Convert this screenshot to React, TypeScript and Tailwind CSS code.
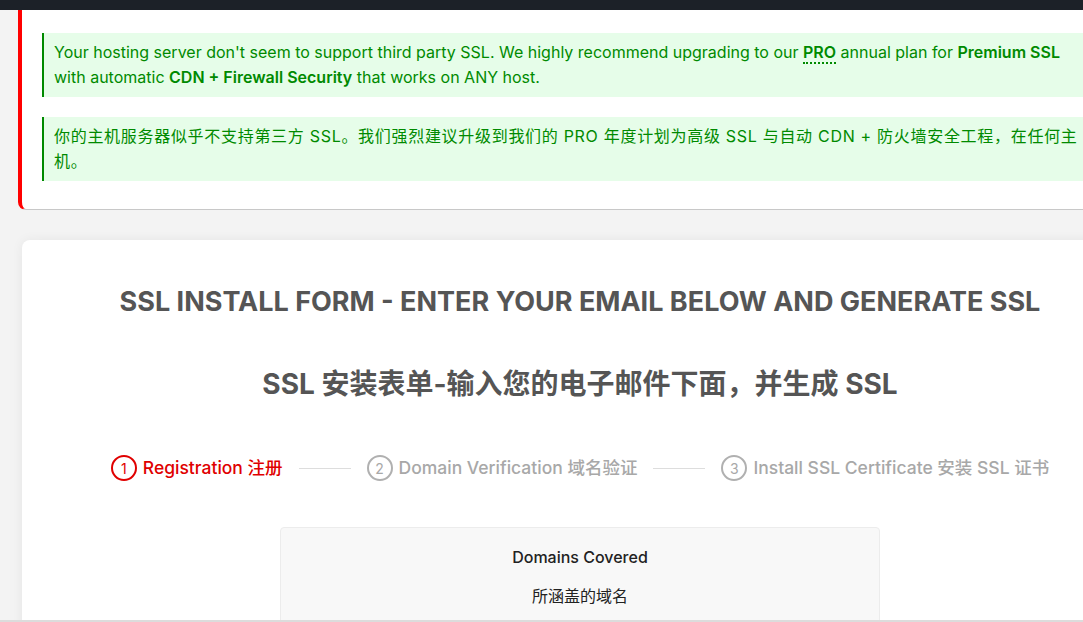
const sans = "font-['Inter','Liberation_Sans','Noto_Sans_CJK_SC',sans-serif]";

const Notice = ({ children, className = '' }: { children: React.ReactNode; className?: string }) => (
  <div
    className={`w-[1058px] border-l-2 border-[#008a00] bg-[#e6fde9] py-[7px] pl-[10px] pr-[12px] text-[16px] leading-[25px] text-[#008a00] ${className}`}
  >
    {children}
  </div>
);

const Step = ({ n, label, active }: { n: number; label: string; active?: boolean }) => (
  <div className={`flex items-center gap-[6px] ${active ? 'text-[#e00000]' : 'text-[#a8a8a8]'}`}>
    <span
      className={`flex h-[26px] w-[26px] items-center justify-center rounded-full border-2 text-[14px] ${
        active ? 'border-[#e00000]' : 'border-[#b0b0b0]'
      }`}
    >
      {n}
    </span>
    <span className="text-[17.5px] font-medium">{label}</span>
  </div>
);

export default function App() {
  return (
    <div className={`h-[622px] w-full overflow-hidden border-b-2 border-[#dcdcdc] bg-[#f3f3f3] ${sans}`}>
      <div className="h-[10px] w-full bg-[#1c2128]" />
      <div className="w-[1160px]">
        {/* notice card */}
        <div className="ml-[18px] w-[1124px] rounded-bl-[8px] border-b border-l-4 border-b-[#c8c8c8] border-l-[#ff0000] bg-white pl-[20px] pt-[23px] pb-[28px]">
          <div className="flex flex-col gap-[20px]">
            <Notice>
              Your hosting server don't seem to support third party SSL. We highly recommend upgrading to our{' '}
              <b className="border-b-2 border-dotted border-[#008a00] font-semibold">PRO</b> annual plan for{' '}
              <b className="font-semibold">Premium SSL</b> with automatic{' '}
              <b className="font-semibold">CDN + Firewall Security</b> that works on ANY host.
            </Notice>
            <Notice className="tracking-[0.7px]">
              你的主机服务器似乎不支持第三方 SSL。我们强烈建议升级到我们的 PRO 年度计划为高级 SSL 与自动 CDN + 防火墙安全工程，在任何主机。
            </Notice>
          </div>
        </div>

        {/* form card */}
        <div className="ml-[22px] mt-[30px] w-[1116px] rounded-[8px] bg-white pt-[45px] pb-[40px] shadow-[0_0_12px_rgba(0,0,0,0.06)]">
          <h1 className="text-center text-[27px] font-bold leading-[34px] text-[#555555]">
            SSL INSTALL FORM - ENTER YOUR EMAIL BELOW AND GENERATE SSL
          </h1>
          <h2 className="mt-[48px] text-center text-[28px] font-bold leading-[34px] text-[#555555]">
            SSL 安装表单-输入您的电子邮件下面，并生成 SSL
          </h2>

          <div className="mt-[54px] flex items-center justify-center gap-[16px]">
            <Step n={1} label="Registration 注册" active />
            <div className="h-px w-[52px] bg-[#dddddd]" />
            <Step n={2} label="Domain Verification 域名验证" />
            <div className="h-px w-[52px] bg-[#dddddd]" />
            <Step n={3} label="Install SSL Certificate 安装 SSL 证书" />
          </div>

          <div className="mx-auto mt-[46px] w-[600px] rounded-[4px] border border-[#ececec] bg-[#f8f8f8] pt-[18px] pb-[40px] text-center text-[#222222]">
            <div className="text-[16px] font-medium leading-[22px]">Domains Covered</div>
            <div className="mt-[17px] text-[16px] leading-[22px]">所涵盖的域名</div>
          </div>
        </div>
      </div>
    </div>
  );
}
